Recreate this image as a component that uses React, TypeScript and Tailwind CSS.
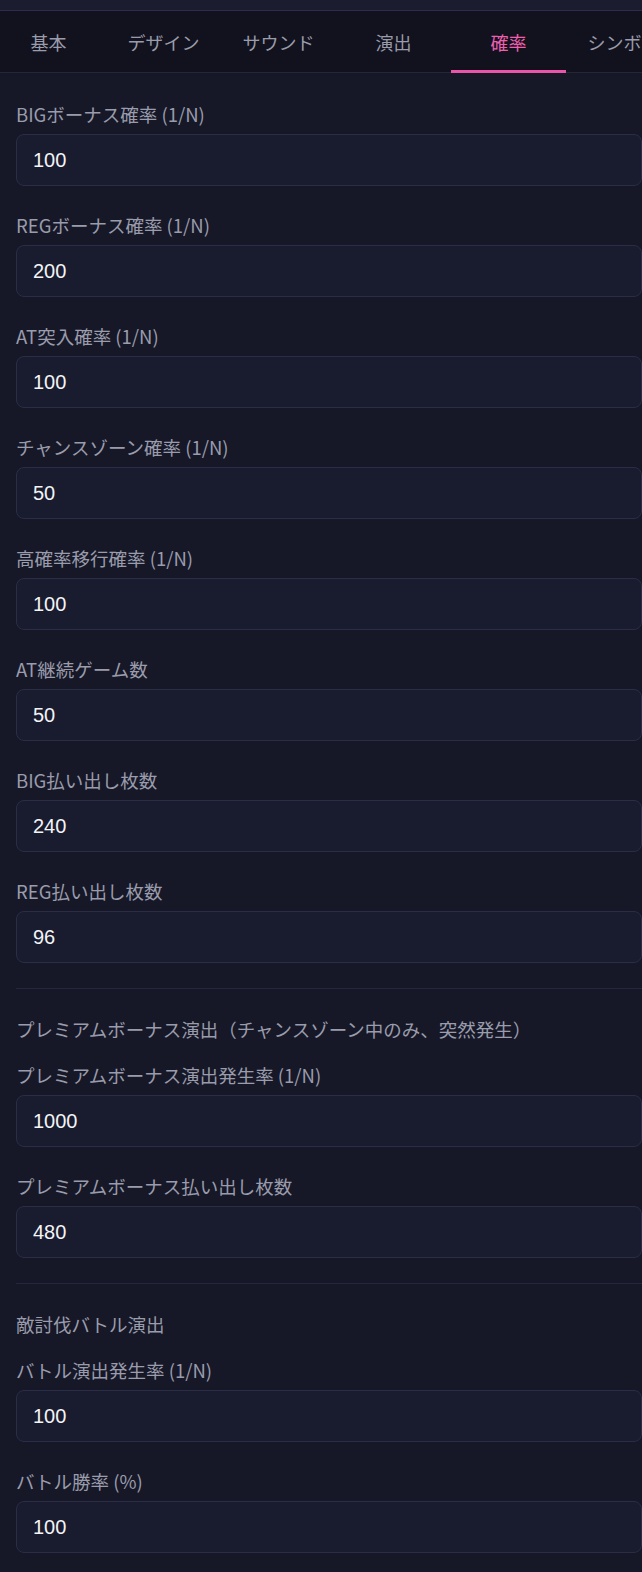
import React from "react";

const tabs = ["基本", "デザイン", "サウンド", "演出", "確率", "シンボル"];

type FieldProps = { label: string; value: string };

function Field({ label, value }: FieldProps) {
  return (
    <div className="flex flex-col">
      <label className="mb-2 h-6 leading-6 text-[18.5px] text-[#9a9cab] whitespace-nowrap font-['Noto_Sans_CJK_JP',sans-serif]">
        {label}
      </label>
      <input
        type="text"
        readOnly
        defaultValue={value}
        className="h-[52px] w-full rounded-lg border border-[#2a2d45] bg-[#191b2e] px-4 text-[20px] text-[#f3f4f6] outline-none font-['Liberation_Sans','Noto_Sans_CJK_JP',sans-serif]"
      />
    </div>
  );
}

function SectionTitle({ children }: { children: React.ReactNode }) {
  return (
    <div className="h-6 leading-6 text-[18.5px] text-[#9a9cab] whitespace-nowrap font-['Noto_Sans_CJK_JP',sans-serif]">
      {children}
    </div>
  );
}

export default function App() {
  return (
    <div className="min-h-screen w-full overflow-hidden bg-[#161828]">
      <div className="h-[11px] border-b border-[#2e2b52] bg-[#1b1c2f]" />
      <div className="border-b border-[#24263a] bg-[#11121e]">
        <div className="-mb-px -ml-[9px] flex">
          {tabs.map((t) => {
            const active = t === "確率";
            return (
              <div
                key={t}
                className={
                  active
                    ? "flex h-[62px] w-[115px] shrink-0 items-center justify-center border-b-[3px] border-[#ea55a9] pt-[3px] text-[18px] text-[#ee5fae] whitespace-nowrap font-['Noto_Sans_CJK_JP',sans-serif]"
                    : "flex h-[62px] w-[115px] shrink-0 items-center justify-center border-b-[3px] border-transparent pt-[3px] text-[18px] text-[#9a9cab] whitespace-nowrap font-['Noto_Sans_CJK_JP',sans-serif]"
                }
              >
                {t}
              </div>
            );
          })}
        </div>
      </div>

      <div className="pl-4 pt-[29px] pb-6">
        <div className="flex flex-col gap-[27px]">
          <Field label="BIGボーナス確率 (1/N)" value="100" />
          <Field label="REGボーナス確率 (1/N)" value="200" />
          <Field label="AT突入確率 (1/N)" value="100" />
          <Field label="チャンスゾーン確率 (1/N)" value="50" />
          <Field label="高確率移行確率 (1/N)" value="100" />
          <Field label="AT継続ゲーム数" value="50" />
          <Field label="BIG払い出し枚数" value="240" />
          <Field label="REG払い出し枚数" value="96" />
        </div>

        <div className="mt-[25px] border-t border-[#25273b] pt-7">
          <SectionTitle>プレミアムボーナス演出（チャンスゾーン中のみ、突然発生）</SectionTitle>
          <div className="mt-[22px] flex flex-col gap-[27px]">
            <Field label="プレミアムボーナス演出発生率 (1/N)" value="1000" />
            <Field label="プレミアムボーナス払い出し枚数" value="480" />
          </div>
        </div>

        <div className="mt-[25px] border-t border-[#25273b] pt-7">
          <SectionTitle>敵討伐バトル演出</SectionTitle>
          <div className="mt-[22px] flex flex-col gap-[27px]">
            <Field label="バトル演出発生率 (1/N)" value="100" />
            <Field label="バトル勝率 (%)" value="100" />
          </div>
        </div>
      </div>
    </div>
  );
}
